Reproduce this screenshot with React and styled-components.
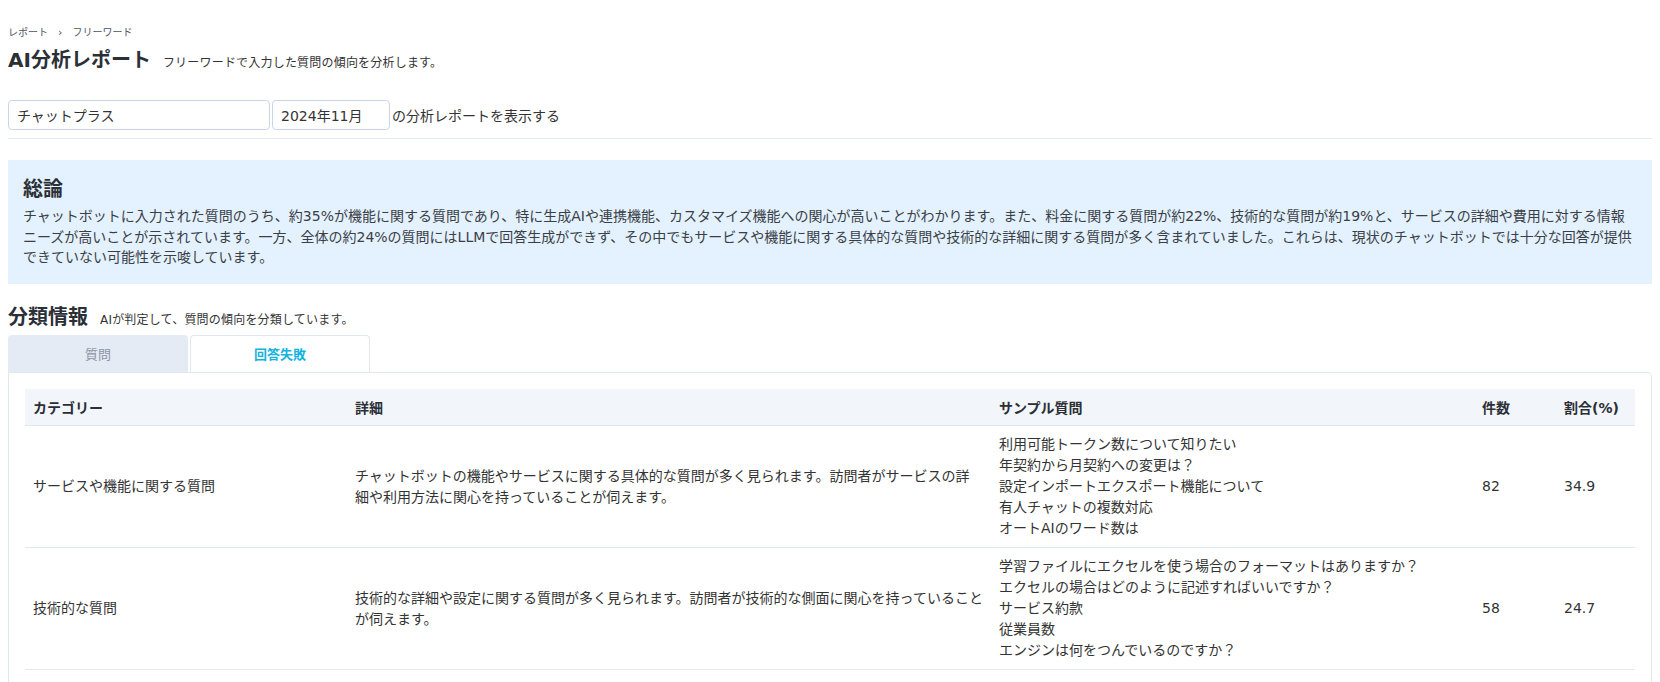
import React from "react";
import styled, { createGlobalStyle } from "styled-components";

const GlobalStyle = createGlobalStyle`
  html, body { background: #ffffff; }
  body {
    margin: 8px;
    font-family: "DejaVu Sans", "Noto Sans CJK JP", sans-serif;
    color: #333333;
  }
  * { box-sizing: border-box; }
`;

const Page = styled.div`
  display: flex;
  flex-direction: column;
`;

const Breadcrumb = styled.nav`
  display: flex;
  align-items: center;
  gap: 10px;
  margin-top: 18px;
  height: 14px;
  font-size: 10px;
  line-height: 14px;
  color: #4d5563;
`;

const Crumb = styled.span``;

const CrumbSep = styled.span`
  font-size: 11px;
  color: #4d5563;
`;

const TitleRow = styled.div`
  display: flex;
  align-items: baseline;
  gap: 12px;
  margin-top: 8px;
  height: 24px;
`;

const PageTitle = styled.h1`
  margin: 0;
  font-size: 20px;
  line-height: 24px;
  font-weight: bold;
  color: #2b2f36;
`;

const Note = styled.span`
  font-size: 12px;
  letter-spacing: 0.2px;
  color: #333333;
`;

const FilterBar = styled.div`
  display: flex;
  align-items: center;
  gap: 2px;
  margin-top: 28px;
  padding-bottom: 8px;
  border-bottom: 1px solid #e6ebf2;
`;

const SelectBox = styled.div`
  width: ${(p) => p.$width}px;
  height: 30px;
  display: flex;
  align-items: center;
  padding: 0 8px;
  border: 1px solid #c9d6e9;
  border-radius: 4px;
  font-size: 14px;
  color: #333333;
  background: #ffffff;
`;

const FilterText = styled.span`
  font-size: 14px;
  color: #333333;
`;

const SummaryCard = styled.section`
  margin-top: 21px;
  background: #e4f1fe;
  padding: 16px 17px 16px 15px;
`;

const SummaryTitle = styled.h2`
  margin: 0 0 4px;
  font-size: 20px;
  line-height: 26px;
  font-weight: bold;
  color: #2b2f36;
`;

const SummaryText = styled.p`
  margin: 0;
  font-size: 14px;
  line-height: 20.5px;
  color: #3a3f47;
`;

const SectionHeader = styled.div`
  display: flex;
  align-items: baseline;
  gap: 12px;
  margin-top: 20px;
  height: 26px;
`;

const SectionTitle = styled.h2`
  margin: 0;
  font-size: 20px;
  line-height: 26px;
  font-weight: bold;
  color: #2b2f36;
`;

const TabList = styled.div`
  display: flex;
  gap: 2px;
  margin-top: 5px;
`;

const Tab = styled.div`
  width: 180px;
  height: 37px;
  display: flex;
  align-items: center;
  justify-content: center;
  font-size: 13px;
  border-radius: 4px 4px 0 0;
  ${(p) =>
    p.$active
      ? `
    background: #ffffff;
    border: 1px solid #e1e7ef;
    border-bottom: none;
    color: #15b3e0;
    font-weight: bold;
  `
      : `
    background: #e5ebf4;
    color: #8b95a5;
  `}
`;

const Panel = styled.div`
  border: 1px solid #e1e7ef;
  border-radius: 0 4px 0 0;
  padding: 16px 16px 40px;
`;

const Table = styled.table`
  width: 100%;
  border-collapse: collapse;
  table-layout: fixed;
  font-size: 14px;
  color: #333333;
`;

const HeadCell = styled.th`
  height: 37px;
  padding: 0 8px;
  text-align: left;
  font-weight: bold;
  font-size: 14px;
  background: #f2f5fa;
  border-bottom: 1px solid #e0e7f0;
  color: #2b2f36;
`;

const Row = styled.tr`
  border-bottom: 1px solid #e2e8f1;
`;

const Cell = styled.td`
  padding: 8px 8px;
  vertical-align: middle;
  line-height: 21px;
`;

const SampleLine = styled.div`
  line-height: 21px;
  white-space: nowrap;
`;

const columns = [
  { key: "category", label: "カテゴリー", width: 322 },
  { key: "detail", label: "詳細", width: 644 },
  { key: "samples", label: "サンプル質問", width: 483 },
  { key: "count", label: "件数", width: 82 },
  { key: "ratio", label: "割合(%)", width: 79 },
];

const rows = [
  {
    category: "サービスや機能に関する質問",
    detail:
      "チャットボットの機能やサービスに関する具体的な質問が多く見られます。訪問者がサービスの詳細や利用方法に関心を持っていることが伺えます。",
    samples: [
      "利用可能トークン数について知りたい",
      "年契約から月契約への変更は？",
      "設定インポートエクスポート機能について",
      "有人チャットの複数対応",
      "オートAIのワード数は",
    ],
    count: "82",
    ratio: "34.9",
  },
  {
    category: "技術的な質問",
    detail:
      "技術的な詳細や設定に関する質問が多く見られます。訪問者が技術的な側面に関心を持っていることが伺えます。",
    samples: [
      "学習ファイルにエクセルを使う場合のフォーマットはありますか？",
      "エクセルの場合はどのように記述すればいいですか？",
      "サービス約款",
      "従業員数",
      "エンジンは何をつんでいるのですか？",
    ],
    count: "58",
    ratio: "24.7",
  },
];

export default function App() {
  return (
    <>
      <GlobalStyle />
      <Page>
        <Breadcrumb>
          <Crumb>レポート</Crumb>
          <CrumbSep>›</CrumbSep>
          <Crumb>フリーワード</Crumb>
        </Breadcrumb>
        <TitleRow>
          <PageTitle>AI分析レポート</PageTitle>
          <Note>フリーワードで入力した質問の傾向を分析します。</Note>
        </TitleRow>
        <FilterBar>
          <SelectBox $width={262}>チャットプラス</SelectBox>
          <SelectBox $width={118}>2024年11月</SelectBox>
          <FilterText>の分析レポートを表示する</FilterText>
        </FilterBar>
        <SummaryCard>
          <SummaryTitle>総論</SummaryTitle>
          <SummaryText>
            チャットボットに入力された質問のうち、約35%が機能に関する質問であり、特に生成AIや連携機能、カスタマイズ機能への関心が高いことがわかります。また、料金に関する質問が約22%、技術的な質問が約19%と、サービスの詳細や費用に対する情報ニーズが高いことが示されています。一方、全体の約24%の質問にはLLMで回答生成ができず、その中でもサービスや機能に関する具体的な質問や技術的な詳細に関する質問が多く含まれていました。これらは、現状のチャットボットでは十分な回答が提供できていない可能性を示唆しています。
          </SummaryText>
        </SummaryCard>
        <SectionHeader>
          <SectionTitle>分類情報</SectionTitle>
          <Note>AIが判定して、質問の傾向を分類しています。</Note>
        </SectionHeader>
        <TabList>
          <Tab>質問</Tab>
          <Tab $active>回答失敗</Tab>
        </TabList>
        <Panel>
          <Table>
            <colgroup>
              {columns.map((c) => (
                <col key={c.key} style={{ width: c.width }} />
              ))}
            </colgroup>
            <thead>
              <tr>
                {columns.map((c) => (
                  <HeadCell key={c.key}>{c.label}</HeadCell>
                ))}
              </tr>
            </thead>
            <tbody>
              {rows.map((r) => (
                <Row key={r.category}>
                  <Cell>{r.category}</Cell>
                  <Cell>{r.detail}</Cell>
                  <Cell>
                    {r.samples.map((s) => (
                      <SampleLine key={s}>{s}</SampleLine>
                    ))}
                  </Cell>
                  <Cell>{r.count}</Cell>
                  <Cell>{r.ratio}</Cell>
                </Row>
              ))}
            </tbody>
          </Table>
        </Panel>
      </Page>
    </>
  );
}
